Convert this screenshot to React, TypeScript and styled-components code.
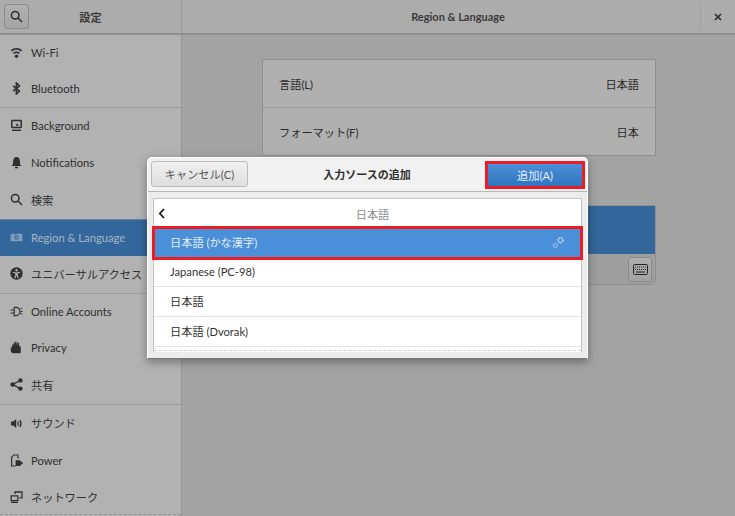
import React from 'react';
import styled, { createGlobalStyle } from 'styled-components';

const fontStack = `Lato, "Noto Sans CJK JP", "Noto Sans", sans-serif`;

const GlobalStyle = createGlobalStyle`
  html, body { margin: 0; padding: 0; background: #a3a3a3; }
  body { font-family: ${fontStack}; }
  * { box-sizing: border-box; }
`;

const Page = styled.div`
  position: relative;
  width: 735px;
  height: 516px;
  overflow: hidden;
  display: flex;
  flex-direction: column;
  background: #a3a3a3;
  color: #2a2a2a;
  font-family: ${fontStack};
`;

/* top bar */
const TopBar = styled.header`
  height: 35px;
  flex: none;
  display: flex;
  background: #acacac;
  border-bottom: 2px solid #8d8d8d;
`;

const SideHead = styled.div`
  width: 182px;
  display: flex;
  align-items: center;
  padding-left: 4px;
  border-right: 1px solid #979797;
`;

const SearchButton = styled.div`
  width: 25px;
  height: 25px;
  display: flex;
  align-items: center;
  justify-content: center;
  color: #2c2c2c;
  border: 1px solid #8c8c8c;
  border-radius: 3px;
  background: linear-gradient(#b0b0b0, #a5a5a5);
`;

const SideTitle = styled.div`
  flex: 1;
  text-align: center;
  font-size: 11.2px;
  font-weight: 700;
  padding-right: 29px;
  color: #3a3a3a;
`;

const MainHead = styled.div`
  flex: 1;
  display: flex;
  align-items: center;
  justify-content: center;
  font-size: 11px;
  font-weight: 700;
  color: #3a3a3a;
  padding-left: 34px;
`;

const CloseCell = styled.div`
  width: 35px;
  height: 26px;
  align-self: center;
  display: flex;
  align-items: center;
  justify-content: center;
  border-left: 1px solid #a0a0a0;
  color: #2c2c2c;
`;

/* body */
const Body = styled.div`
  flex: 1;
  display: flex;
  min-height: 0;
`;

const Sidebar = styled.nav`
  width: 182px;
  flex: none;
  background: #b2b2b2;
  border-right: 1px solid #969696;
  position: relative;
`;

const Group = styled.div<{ $last?: boolean }>`
  border-bottom: ${(p) => (p.$last ? 'none' : '1px solid #9c9c9c')};
`;

const Row = styled.div<{ $active?: boolean; $height: number; $lift: number }>`
  height: ${(p) => p.$height}px;
  display: flex;
  align-items: center;
  padding: 0 0 ${(p) => p.$lift}px 10px;
  gap: 8px;
  font-size: 11.2px;
  white-space: nowrap;
  color: ${(p) => (p.$active ? '#a5b6c8' : '#2f2f2f')};
  background: ${(p) => (p.$active ? '#33669a' : 'transparent')};
  border-top: ${(p) => (p.$active ? '1px solid #5d83aa' : 'none')};
`;

const IconSlot = styled.span<{ $active?: boolean }>`
  width: 13px;
  height: 13px;
  flex: none;
  display: flex;
  color: ${(p) => (p.$active ? '#7f9dbd' : '#2f2f2f')};
`;

const Main = styled.main`
  flex: 1;
  padding: 24px 79px 0 80px;
  display: flex;
  flex-direction: column;
`;

const Card = styled.section`
  border: 1px solid #8f8f8f;
  background: #b0b0b0;
`;

const CardRow = styled.div<{ $divider?: boolean }>`
  height: ${(p) => (p.$divider ? 48 : 47)}px;
  display: flex;
  align-items: center;
  justify-content: space-between;
  padding: 1px 16px 0;
  font-size: 11.2px;
  color: #2a2a2a;
  border-top: ${(p) => (p.$divider ? '1px solid #9c9c9c' : 'none')};
`;

const InputCard = styled.section`
  margin-top: 49px;
  height: 80px;
  border: 1px solid #8f8f8f;
  border-radius: 0 0 4px 4px;
  display: flex;
  flex-direction: column;
`;

const InputActive = styled.div`
  height: 48px;
  flex: none;
  background: #33669a;
`;

const InputTools = styled.div`
  flex: 1;
  display: flex;
  justify-content: flex-end;
  align-items: center;
  padding-right: 3px;
  background: #9e9e9e;
`;

const KeyboardButton = styled.div`
  width: 24px;
  height: 25px;
  display: flex;
  align-items: center;
  justify-content: center;
  border: 1px solid #8a8a8a;
  border-radius: 3px;
  background: linear-gradient(#aeaeae, #a3a3a3);
`;

/* dialog on top */
const Dialog = styled.div`
  position: absolute;
  left: 147px;
  top: 157px;
  width: 441px;
  height: 202px;
  display: flex;
  flex-direction: column;
  background: #ececec;
  border: 1px solid #fff;
  border-bottom-color: #777;
  border-radius: 5px 5px 0 0;
  box-shadow: 0 3px 10px rgba(0, 0, 0, 0.35);
`;

const DialogHead = styled.div`
  height: 34px;
  flex: none;
  display: flex;
  align-items: center;
  justify-content: space-between;
  padding: 0 5px 1px 3px;
  background: #f1f1f1;
  border-bottom: 1px solid #b5b5b5;
  border-radius: 5px 5px 0 0;
`;

const CancelButton = styled.div`
  width: 97px;
  height: 26px;
  display: flex;
  align-items: center;
  justify-content: center;
  font-size: 11.2px;
  color: #555;
  border: 1px solid #bcbcbc;
  border-radius: 3px;
  background: linear-gradient(#f0f0f0, #dedede);
`;

const DialogTitle = styled.div`
  font-size: 11px;
  font-weight: 700;
  color: #2e2e2e;
  padding-right: 2px;
`;

const AddButton = styled.div`
  width: 94px;
  height: 22px;
  margin-top: 1px;
  display: flex;
  align-items: center;
  justify-content: center;
  font-size: 11.2px;
  color: #e8f0f8;
  background: linear-gradient(#4a90d9, #2f74bd);
  outline: 3px solid #ed1c24;
`;

const ListPane = styled.div`
  margin: 6px 5px 0;
  height: 154px;
  background: #fff;
  border: 1px solid #c4c4c4;
  border-bottom: none;
  display: flex;
  flex-direction: column;
  position: relative;
`;

const BackRow = styled.div`
  height: 29px;
  flex: none;
  position: relative;
  display: flex;
  align-items: center;
  justify-content: center;
  font-size: 11.2px;
  color: #8c8c8c;
  padding-left: 10px;
`;

const BackArrow = styled.span`
  position: absolute;
  left: 4px;
  top: 9px;
  display: flex;
`;

const LangRow = styled.div<{ $selected?: boolean }>`
  height: 29.7px;
  flex: none;
  display: flex;
  align-items: center;
  justify-content: space-between;
  padding: 0 16px 1px;
  font-size: 11.2px;
  position: relative;
  z-index: ${(p) => (p.$selected ? 1 : 0)};
  color: ${(p) => (p.$selected ? '#e4edf6' : '#333')};
  background: ${(p) => (p.$selected ? '#4a90d9' : '#fff')};
  border-bottom: ${(p) => (p.$selected ? 'none' : '1px solid #e4e4e4')};
  outline: ${(p) => (p.$selected ? '3px solid #ed1c24' : 'none')};
  outline-offset: -1px;
`;

const Dashes = styled.div`
  position: absolute;
  left: 0;
  right: 0;
  bottom: 1px;
  border-bottom: 1px dashed #cfcfcf;
`;

const SideDashes = styled(Dashes)`
  border-bottom-color: #959595;
`;

const Ic = styled.svg`
  width: 13px;
  height: 13px;
  fill: currentColor;
`;

const icons: Record<string, React.ReactNode> = {
  wifi: (
    <>
      <path d="M.8 4.4C4.3 1.2 8.7 1.2 12.2 4.4L11.1 5.6C8.2 3.1 4.8 3.1 1.9 5.6z" />
      <path d="M3 6.8C5.1 5 7.9 5 10 6.8L9 8C7.5 6.8 5.5 6.8 4 8z" />
      <circle cx="6.5" cy="10.2" r="1.7" />
    </>
  ),
  bluetooth: <path fill="none" stroke="currentColor" strokeWidth="1.6" d="M3.2 3.8l6.2 5.2-3 3V1l3 3-6.2 5.2" />,
  background: (
    <>
      <path d="M2.4.8h8.2c.8 0 1.4.6 1.4 1.4v5.6c0 .8-.6 1.4-1.4 1.4H2.4C1.6 9.2 1 8.6 1 7.8V2.2C1 1.4 1.6.8 2.4.8zm.1 1.4V7.8h8V2.2z" fillRule="evenodd" />
      <path d="M5.5 6.8l1.6-2.6 1.8 2.6z" />
      <rect x="2" y="10.6" width="9" height="1.4" />
    </>
  ),
  bell: (
    <>
      <path d="M6.5 1C8.6 1 9.6 2.6 9.8 4.6L10.2 8.4 11.6 10H1.4L2.8 8.4 3.2 4.6C3.4 2.6 4.4 1 6.5 1z" />
      <rect x="5" y="10.7" width="3" height="1.6" />
    </>
  ),
  search: <path fill="none" stroke="currentColor" strokeWidth="1.5" d="M8 8l4 4M9 5.2a3.8 3.8 0 1 1-7.6 0 3.8 3.8 0 0 1 7.6 0z" />,
  region: (
    <path
      fillRule="evenodd"
      d="M.6 3.4L4 2.6l1.2.8 3-.8 4.2.3v7.4l-4.2-.3-3 .6-1.2-.5-3.4.4zM6.5 4.2a2.2 2.2 0 1 0 0 4.4 2.2 2.2 0 0 0 0-4.4zm0 1a1.2 1.2 0 1 1 0 2.4 1.2 1.2 0 0 1 0-2.4z"
    />
  ),
  access: (
    <path
      fillRule="evenodd"
      d="M6.5.3a6.2 6.2 0 1 1 0 12.4 6.2 6.2 0 0 1 0-12.4zm0 1.7a1.2 1.2 0 1 0 0 2.4 1.2 1.2 0 0 0 0-2.4zM2.8 4.7v1.1l2.5.6v1.4l-1 3.2 1.1.3 1.1-3 1.1 3 1.1-.3-1-3.2V6.4l2.5-.6V4.7L6.5 5.5z"
    />
  ),
  accounts: (
    <>
      <path fill="none" stroke="currentColor" strokeWidth="1.2" d="M4.2 2.4h1.7a4 4 0 0 1 0 8.2H4.2zM.6 5h3.6M.6 8h3.6" />
      <path d="M10.4 3.4l1.9-.8v.9l-1.9.8zM10.6 6l2.1-.2v.9l-2.1.2zM10.4 8l1.9.8v.9l-1.9-.8z" />
    </>
  ),
  hand: (
    <path d="M.8 6.2h1.4V3.6h1.3v-2h1.1v2h.4V.7h1.1v2.9h.4V1h1.1v2.6h.4V1.9h1.1v3.4h1.1l.6.6v5c0 .7-.6 1.3-1.3 1.3H3.2c-1.3 0-2.4-1-2.4-2.4z" />
  ),
  share: (
    <>
      <circle cx="2.6" cy="6.5" r="2.2" />
      <circle cx="10.4" cy="2.4" r="2.2" />
      <circle cx="10.4" cy="10.6" r="2.2" />
      <path fill="none" stroke="currentColor" strokeWidth="1.3" d="M10.4 2.4L2.6 6.5l7.8 4.1" />
    </>
  ),
  sound: (
    <>
      <path d="M1 4.4h2.2L6.2 2v9L3.2 8.6H1z" />
      <path fill="none" stroke="currentColor" strokeWidth="1.3" d="M7.8 4.4c.7 1.4.7 2.8 0 4.2M10 3c1.2 2.2 1.2 4.8 0 7" />
    </>
  ),
  power: (
    <>
      <path fill="none" stroke="currentColor" strokeWidth="1.2" d="M5.6 12H1.6V3.2L3.8 1H8v3.4" />
      <path d="M5.6 6.2h3.6a3.2 3.2 0 0 1 2.6 2.3H13v1.2h-1.2a3.2 3.2 0 0 1-2.6 2.3H5.6z" />
    </>
  ),
  network: (
    <>
      <path fill="none" stroke="currentColor" strokeWidth="1.3" d="M1.2 4.8h6.6v4.8H1.2zM5 3V1h7v5.8H9.4" />
      <path d="M1 10.7h7V12H1z" />
    </>
  ),
};

const Icon = ({ name, active }: { name: string; active?: boolean }) => (
  <IconSlot $active={active}>
    <Ic viewBox="0 0 13 13">{icons[name]}</Ic>
  </IconSlot>
);

const groups: { height: number; lift: number; rows: string[][] }[] = [
  {
    height: 36,
    lift: 1,
    rows: [
      ['wifi', 'Wi-Fi'],
      ['bluetooth', 'Bluetooth'],
    ],
  },
  {
    height: 37,
    lift: 2,
    rows: [
      ['background', 'Background'],
      ['bell', 'Notifications'],
      ['search', '検索'],
      ['region', 'Region & Language'],
      ['access', 'ユニバーサルアクセス'],
    ],
  },
  {
    height: 36.67,
    lift: 2,
    rows: [
      ['accounts', 'Online Accounts'],
      ['hand', 'Privacy'],
      ['share', '共有'],
    ],
  },
  {
    height: 37,
    lift: 0,
    rows: [
      ['sound', 'サウンド'],
      ['power', 'Power'],
      ['network', 'ネットワーク'],
    ],
  },
];

const Gears = () => (
  <svg width="13" height="13" viewBox="0 0 13 13" fill="none" stroke="#b4cfec">
    <circle cx="8.5" cy="4.3" r="2.4" strokeWidth="1.7" strokeDasharray="1.5 .6" />
    <circle cx="3.4" cy="9.4" r="1.9" strokeWidth="1.2" strokeDasharray="1.3 .5" />
  </svg>
);

export default function App() {
  return (
    <Page>
      <GlobalStyle />
      <TopBar>
        <SideHead>
          <SearchButton>
            <Ic viewBox="0 0 13 13">{icons.search}</Ic>
          </SearchButton>
          <SideTitle>設定</SideTitle>
        </SideHead>
        <MainHead>Region &amp; Language</MainHead>
        <CloseCell>
          <svg width="8" height="8" viewBox="0 0 8 8" stroke="currentColor" strokeWidth="1.7">
            <path d="M1 1l6 6M7 1L1 7" />
          </svg>
        </CloseCell>
      </TopBar>
      <Body>
        <Sidebar>
          {groups.map((g, i) => (
            <Group key={i} $last={i === groups.length - 1}>
              {g.rows.map(([icon, label]) => (
                <Row key={label} $height={g.height} $lift={g.lift} $active={icon === 'region'}>
                  <Icon name={icon} active={icon === 'region'} />
                  {label}
                </Row>
              ))}
            </Group>
          ))}
          <SideDashes />
        </Sidebar>
        <Main>
          <Card>
            <CardRow>
              <span>言語(L)</span>
              <span>日本語</span>
            </CardRow>
            <CardRow $divider>
              <span>フォーマット(F)</span>
              <span>日本</span>
            </CardRow>
          </Card>
          <InputCard>
            <InputActive />
            <InputTools>
              <KeyboardButton>
                <svg width="15" height="11" viewBox="0 0 15 11">
                  <rect x="0.5" y="0.5" width="14" height="10" rx="1" fill="none" stroke="#222" />
                  <path stroke="#222" strokeDasharray="1 1" d="M2 3h11M2 5.5h11" />
                  <path stroke="#222" d="M3 8h9" />
                </svg>
              </KeyboardButton>
            </InputTools>
          </InputCard>
        </Main>
      </Body>
      <Dialog>
        <DialogHead>
          <CancelButton>キャンセル(C)</CancelButton>
          <DialogTitle>入力ソースの追加</DialogTitle>
          <AddButton>追加(A)</AddButton>
        </DialogHead>
        <ListPane>
          <BackRow>
            <BackArrow>
              <svg width="8" height="11" viewBox="0 0 8 11" fill="none" stroke="#111" strokeWidth="1.7">
                <path d="M6 1L1.8 5.5 6 10" />
              </svg>
            </BackArrow>
            日本語
          </BackRow>
          <LangRow $selected>
            <span>日本語 (かな漢字)</span>
            <Gears />
          </LangRow>
          <LangRow>Japanese (PC-98)</LangRow>
          <LangRow>日本語</LangRow>
          <LangRow>日本語 (Dvorak)</LangRow>
          <Dashes />
        </ListPane>
      </Dialog>
    </Page>
  );
}
